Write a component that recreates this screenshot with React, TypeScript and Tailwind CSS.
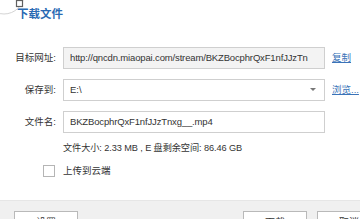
import React from "react";

const font = { fontFamily: '"Liberation Sans", "Noto Sans CJK SC", sans-serif' };

export default function App() {
  return (
    <div
      className="relative flex h-[219px] w-[360px] flex-col overflow-hidden bg-white text-[#333]"
      style={font}
    >
      <svg className="absolute left-0 top-0" width="28" height="16" viewBox="0 0 28 16">
        <circle cx="4" cy="-6" r="20" fill="#fff" stroke="#d4d4d4" strokeWidth="1" />
        <rect x="16.5" y="0.5" width="6" height="6" fill="#fff" stroke="#606060" strokeWidth="1.2" />
      </svg>
      <div className="pl-[17px] pt-[6px] text-[11.5px] font-bold leading-[16px] text-[#2a6ab3]">下载文件</div>

      <div className="mt-[25px] grid grid-cols-[56px_262px_auto] items-center gap-x-[7px] gap-y-[10px] text-[9.5px] whitespace-nowrap">
        <div className="text-right">目标网址:</div>
        <div className="flex h-[22px] items-center overflow-hidden whitespace-nowrap border border-[#cfcfcf] bg-[#f3f3f3] pl-[6px] text-[9.5px] tracking-[-0.15px]">
          http://qncdn.miaopai.com/stream/BKZBocphrQxF1nfJJzTn
        </div>
        <div className="text-[#3a73b8] underline">复制</div>

        <div className="text-right">保存到:</div>
        <div className="flex h-[22px] items-center justify-between border border-[#cfcfcf] bg-white pl-[6px] pr-[8px] text-[9.5px]">
          <span>E:\</span>
          <svg width="6" height="4" viewBox="0 0 6 4">
            <path d="M0 0 L6 0 L3 3 Z" fill="#777" />
          </svg>
        </div>
        <div className="text-[#3a73b8] underline">浏览...</div>

        <div className="text-right">文件名:</div>
        <div className="flex h-[22px] items-center overflow-hidden whitespace-nowrap border border-[#cfcfcf] bg-white pl-[6px] text-[9.5px] tracking-[-0.15px]">
          BKZBocphrQxF1nfJJzTnxg__.mp4
        </div>
        <div />
      </div>

      <div className="mt-[7px] whitespace-nowrap pl-[63px] text-[9.2px] leading-[16px] tracking-[-0.1px]">文件大小: 2.33 MB , E 盘剩余空间: 86.46 GB</div>

      <div className="mt-[8px] flex items-center pl-[43px] text-[9.5px]">
        <div className="h-[12px] w-[12px] border border-[#b5b5b5] bg-white" />
        <span className="ml-[8px]">上传到云端</span>
      </div>

      <div className="mt-auto flex h-[19px] shrink-0 border-t border-[#e6e6e6] bg-[#f0f0f0] pt-[10px]">
        <div className="ml-[14px] flex h-[22px] w-[64px] justify-center border border-[#b9b9b9] bg-white pt-[3px] text-[10px]">设置</div>
        <div className="ml-auto flex gap-[10px]">
          <div className="flex h-[22px] w-[64px] justify-center border border-[#b9b9b9] bg-white pt-[3px] text-[10px]">下载</div>
          <div className="mr-[-21px] flex h-[22px] w-[64px] justify-center border border-[#b9b9b9] bg-white pt-[3px] text-[10px]">取消</div>
        </div>
      </div>
    </div>
  );
}
